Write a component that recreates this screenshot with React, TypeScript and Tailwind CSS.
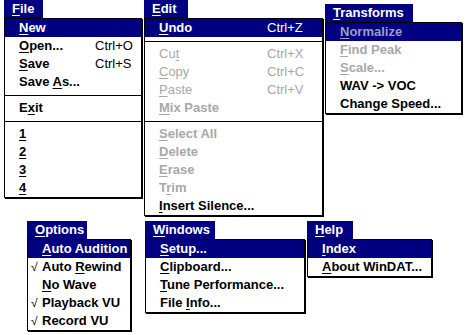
import React from 'react';

type Row =
  | 'sep'
  | {
      label: string;
      u?: number;
      keys?: string;
      off?: boolean;
      thin?: boolean;
      check?: boolean;
      active?: boolean;
    };

// underline the mnemonic letter
const Mnemonic = ({ text, u }: { text: string; u?: number }) => {
  if (u === undefined) return <>{text}</>;
  return (
    <>
      {text.slice(0, u)}
      <span className="underline decoration-1 underline-offset-2">{text[u]}</span>
      {text.slice(u + 1)}
    </>
  );
};

type MenuProps = {
  title: string;
  titleW: string;
  boxW: string;
  labelW?: string;
  rows: Row[];
  className?: string;
};

const Menu = ({ title, titleW, boxW, labelW, rows, className }: MenuProps) => (
  <div className={className}>
    <div className={`${titleW} h-[18px] bg-[#000080] pl-[8px] text-white font-bold leading-[18px]`}>
      <Mnemonic text={title} u={0} />
    </div>
    <div className={`${boxW} border border-black bg-white shadow-[1px_1px_0_#000]`}>
      {rows.map((row, i) =>
        row === 'sep' ? (
          <div key={i} className="flex h-[8px] items-center">
            <div className="h-px w-full bg-black" />
          </div>
        ) : (
          <div
            key={i}
            className={`flex h-[18px] items-center pl-[3px] leading-[18px] ${row.active ? 'bg-[#000080]' : ''} ${
              row.off
                ? row.active
                  ? 'text-[#9c9cc4]'
                  : 'text-[#a8a8a8]'
                : row.active
                  ? 'text-white'
                  : 'text-black'
            }`}
          >
            <span className="w-[11px] text-[12px] font-normal">{row.check ? '√' : ''}</span>
            <span className={`${labelW ?? ''} whitespace-nowrap ${row.thin ? 'font-normal' : 'font-bold'}`}>
              <Mnemonic text={row.label} u={row.u} />
            </span>
            {row.keys && <span className="whitespace-nowrap font-normal">{row.keys}</span>}
          </div>
        ),
      )}
    </div>
  </div>
);

const FILE: Row[] = [
  { label: 'New', u: 0, active: true },
  { label: 'Open...', u: 0, keys: 'Ctrl+O' },
  { label: 'Save', u: 0, keys: 'Ctrl+S' },
  { label: 'Save As...', u: 5 },
  'sep',
  { label: 'Exit', u: 1 },
  'sep',
  { label: '1', u: 0 },
  { label: '2', u: 0 },
  { label: '3', u: 0 },
  { label: '4', u: 0 },
];

const EDIT: Row[] = [
  { label: 'Undo', u: 0, keys: 'Ctrl+Z', active: true },
  'sep',
  { label: 'Cut', u: 2, keys: 'Ctrl+X', off: true, thin: true },
  { label: 'Copy', u: 0, keys: 'Ctrl+C', off: true, thin: true },
  { label: 'Paste', u: 0, keys: 'Ctrl+V', off: true, thin: true },
  { label: 'Mix Paste', u: 0, off: true },
  'sep',
  { label: 'Select All', u: 0, off: true },
  { label: 'Delete', u: 0, off: true },
  { label: 'Erase', u: 0, off: true },
  { label: 'Trim', u: 1, off: true },
  { label: 'Insert Silence...', u: 0 },
];

const TRANSFORMS: Row[] = [
  { label: 'Normalize', u: 0, off: true, active: true },
  { label: 'Find Peak', u: 0, off: true },
  { label: 'Scale...', u: 0, off: true },
  { label: 'WAV -> VOC' },
  { label: 'Change Speed...' },
];

const OPTIONS: Row[] = [
  { label: 'Auto Audition', u: 0, active: true },
  { label: 'Auto Rewind', u: 5, check: true },
  { label: 'No Wave', u: 0 },
  { label: 'Playback VU', check: true },
  { label: 'Record VU', check: true },
];

const WINDOWS: Row[] = [
  { label: 'Setup...', u: 0, active: true },
  { label: 'Clipboard...', u: 0 },
  { label: 'Tune Performance...', u: 0 },
  { label: 'File Info...', u: 5 },
];

const HELP: Row[] = [
  { label: 'Index', u: 0, active: true },
  { label: 'About WinDAT...', u: 0 },
];

export default function App() {
  return (
    <div className="h-[335px] w-[466px] overflow-hidden bg-white font-['Liberation_Sans',Arial,sans-serif] text-[13px]">
      <div className="flex items-start">
        <Menu className="ml-[4px]" title="File" titleW="w-[39px]" boxW="w-[138px]" labelW="w-[76px]" rows={FILE} />
        <Menu className="ml-[2px]" title="Edit" titleW="w-[44px]" boxW="w-[179px]" labelW="w-[108px]" rows={EDIT} />
        <Menu className="ml-[2px] mt-[4px]" title="Transforms" titleW="w-[88px]" boxW="w-[137px]" rows={TRANSFORMS} />
      </div>
      <div className="mt-[5px] flex items-start">
        <Menu className="ml-[27px]" title="Options" titleW="w-[60px]" boxW="w-[104px]" rows={OPTIONS} />
        <Menu className="ml-[14px]" title="Windows" titleW="w-[70px]" boxW="w-[160px]" rows={WINDOWS} />
        <Menu className="ml-[2px]" title="Help" titleW="w-[46px]" boxW="w-[125px]" rows={HELP} />
      </div>
    </div>
  );
}
